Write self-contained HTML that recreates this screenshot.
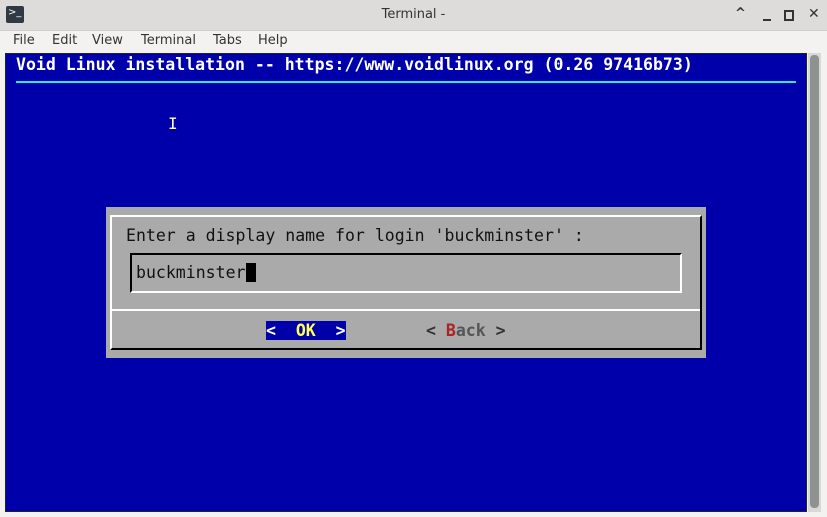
<html><head><style>
body{margin:0;width:827px;height:517px;background:#f3f2f1;position:relative;overflow:hidden;font-family:"DejaVu Sans",sans-serif}
.a{position:absolute}
.m{font-family:"DejaVu Sans Mono",monospace;font-size:16.55px;white-space:pre;line-height:19px}
.mi{position:absolute;top:33px;font-size:13px;color:#333}
</style></head><body>
<div class="a" style="left:0;top:0;width:827px;height:30px;background:#dedcda;border-bottom:1px solid #d0cecc"></div>
<div class="a" style="left:6px;top:6px;width:18px;height:17px;background:#2f3a44;border-radius:2px;color:#fff;font-size:10px;line-height:14px;padding-left:2px;box-sizing:border-box">&gt;_</div>
<div class="a" style="left:0;top:7px;width:827px;text-align:center;font-size:13px;color:#333">Terminal -</div>
<div class="a" style="left:735px;top:6px;font-size:13px;color:#333;font-weight:bold">^</div>
<div class="a" style="left:763px;top:19px;width:8px;height:2px;background:#333"></div>
<div class="a" style="left:784px;top:10px;width:6px;height:7px;border:2px solid #333"></div>
<div class="a" style="left:808px;top:6px;font-size:14px;color:#333">✕</div>
<div class="mi" style="left:13px">File</div>
<div class="mi" style="left:52px">Edit</div>
<div class="mi" style="left:92px">View</div>
<div class="mi" style="left:141px">Terminal</div>
<div class="mi" style="left:213px">Tabs</div>
<div class="mi" style="left:258px">Help</div>
<div class="a" style="left:5px;top:53px;width:802px;height:459px;background:#0000aa;border:1px solid #222;box-sizing:border-box"></div>
<div class="a" style="left:808px;top:53px;width:13px;height:459px;background:#d8d8d8"></div>
<div class="a" style="left:810px;top:55px;width:9px;height:453px;background:#8e9291;border-radius:4px"></div>
<div class="a m" style="left:16px;top:55px;color:#fff;font-weight:bold">Void Linux installation -- https://www.voidlinux.org (0.26 97416b73)</div>
<div class="a" style="left:16px;top:81px;width:780px;height:2px;background:#33e6f0"></div>
<div class="a" style="left:168px;top:114px;font-size:16px;color:#fff;font-family:'DejaVu Sans Mono',monospace">I</div>
<div class="a" style="left:106px;top:207px;width:600px;height:151px;background:#aaaaaa"></div>
<div class="a" style="left:110px;top:215px;width:592px;height:135px;border-left:2px solid #fff;border-top:2px solid #fff;border-right:2px solid #000;border-bottom:2px solid #000;box-sizing:border-box"></div>
<div class="a" style="left:112px;top:309px;width:588px;height:2px;background:#fff"></div>
<div class="a m" style="left:126px;top:226px;color:#111">Enter a display name for login 'buckminster' :</div>
<div class="a" style="left:130px;top:253px;width:552px;height:40px;border-left:2px solid #000;border-top:2px solid #000;border-right:2px solid #fff;border-bottom:2px solid #fff;box-sizing:border-box"></div>
<div class="a m" style="left:136px;top:263px;color:#111">buckminster</div>
<div class="a" style="left:246px;top:263px;width:10px;height:19px;background:#000"></div>
<div class="a m" style="left:266px;top:321px;width:80px;height:19px;background:#0000aa;color:#fff;font-weight:bold">&lt;  <span style="color:#ffff55">OK</span>  &gt;</div>
<div class="a m" style="left:426px;top:321px;color:#333;font-weight:bold">&lt; <span style="color:#aa2222">B</span><span style="color:#555">ack</span> &gt;</div>
</body></html>
